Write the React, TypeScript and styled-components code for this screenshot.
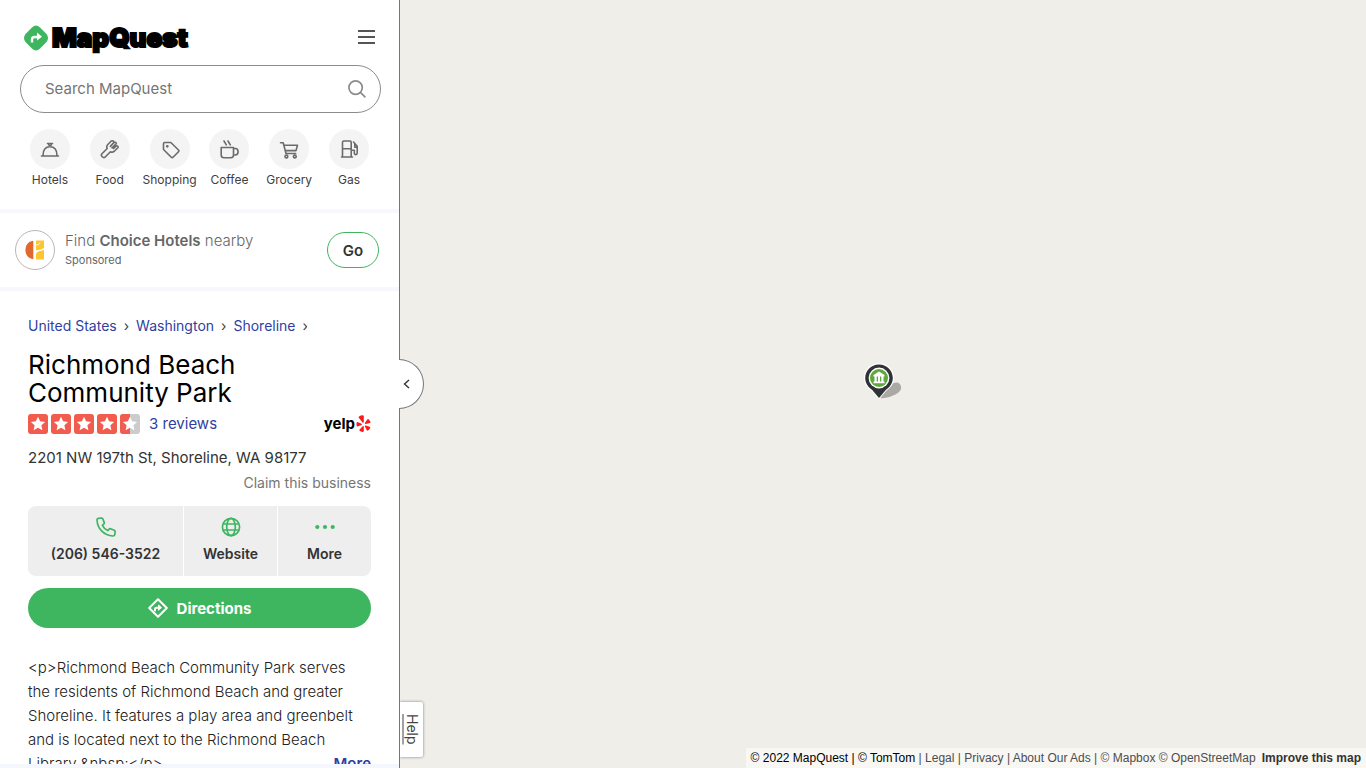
import React from 'react';
import styled, { createGlobalStyle } from 'styled-components';

const GlobalStyle = createGlobalStyle`
  *, *::before, *::after { box-sizing: border-box; }
  body { margin: 0; overflow: hidden; font-family: Inter, "Open Sans", sans-serif; color: #333; background: #f0eee9; }
  h1, p, ol, ul { margin: 0; padding: 0; }
  ol, ul { list-style: none; }
  a { color: inherit; text-decoration: none; }
  button { font: inherit; color: inherit; cursor: pointer; padding: 0; border: 0; background: none; }
  svg { display: block; flex: none; }
`;

const Page = styled.div`
  display: flex;
  height: 100vh;
`;

const Sidebar = styled.aside`
  flex: 0 0 400px;
  display: flex;
  flex-direction: column;
  background: #fff;
  border-right: 1px solid #757575;
  min-height: 0;
`;

const Scroll = styled.div`
  flex: 1;
  min-height: 0;
  overflow: hidden;
`;

const BottomStrip = styled.div`
  height: 4px;
  background: #f5f7ff;
`;

const Top = styled.header`
  padding: 22px 18px 21px 20px;
  border-bottom: 4px solid #f7f7fd;
`;

const Brand = styled.div`
  display: flex;
  justify-content: space-between;
  align-items: center;
  height: 32px;
  padding: 0 6px 0 4px;
`;

const LogoLink = styled.a`
  display: flex;
  align-items: center;
  gap: 4px;
`;

const Wordmark = styled.span`
  font-size: 26px;
  line-height: 32px;
  font-weight: 900;
  color: #000;
  -webkit-text-stroke: 2px #000;
`;

const SearchBox = styled.form`
  display: flex;
  align-items: center;
  height: 48px;
  margin-top: 11px;
  padding: 0 14px 0 24px;
  border: 1px solid #8c8c8c;
  border-radius: 24px;
`;

const SearchInput = styled.input`
  flex: 1;
  min-width: 0;
  border: 0;
  padding: 0;
  outline: none;
  background: none;
  font: 400 15px/20px Inter, "Open Sans", sans-serif;
  &::placeholder { color: #757575; opacity: 1; }
`;

const Categories = styled.ul`
  display: grid;
  grid-template-columns: repeat(6, 1fr);
  margin: 16px 2px 0 0;
`;

const Category = styled.button`
  display: flex;
  flex-direction: column;
  align-items: center;
  width: 100%;
  gap: 3px;
  font-size: 12px;
  line-height: 16px;
  color: #404040;
`;

const CategoryDisc = styled.span`
  display: grid;
  place-items: center;
  width: 40px;
  height: 40px;
  border-radius: 50%;
  background: #f4f4f4;
`;

const Promo = styled.section`
  display: flex;
  align-items: center;
  gap: 10px;
  height: 78px;
  padding: 0 20px 0 15px;
  border-bottom: 4px solid #f7f7fd;
`;

const PromoLogo = styled.span`
  display: grid;
  place-items: center;
  width: 40px;
  height: 40px;
  border: 1px solid #bdb5b1;
  border-radius: 50%;
`;

const PromoText = styled.div`
  flex: 1;
  font-size: 15px;
  font-weight: 300;
  line-height: 20px;
  color: #666;
  strong { font-weight: 600; }
`;

const Sponsored = styled.p`
  font-size: 11px;
  font-weight: 400;
  line-height: 18px;
`;

const GoButton = styled.button`
  width: 52px;
  height: 36px;
  border: 1px solid #3fb560;
  border-radius: 18px;
  font-size: 15px;
  font-weight: 600;
  color: #333;
`;

const Details = styled.main`
  padding: 25px 28px 0;
`;

const Crumbs = styled.ol`
  display: flex;
  gap: 7px;
  font-size: 14px;
  line-height: 20px;
  color: #303f9f;
`;

const Crumb = styled.li`
  display: flex;
  gap: 7px;
  &::after { content: "›"; color: #404040; }
`;

const Title = styled.h1`
  margin-top: 15px;
  font-size: 26px;
  line-height: 28px;
  font-weight: 400;
  color: #000;
`;

const Rating = styled.div`
  display: flex;
  align-items: center;
  height: 20px;
  margin-top: 7px;
`;

const Stars = styled.div`
  display: flex;
  gap: 3px;
`;

const Reviews = styled.a`
  margin-left: 9px;
  font-size: 15px;
  line-height: 20px;
  color: #303f9f;
`;

const Yelp = styled.a`
  display: flex;
  align-items: center;
  gap: 1px;
  margin-left: auto;
  font-size: 15px;
  line-height: 20px;
  font-weight: 700;
  color: #000;
`;

const Address = styled.p`
  margin-top: 12px;
  font-size: 15px;
  line-height: 24px;
`;

const Claim = styled.a`
  display: block;
  text-align: right;
  font-size: 14px;
  line-height: 25px;
  color: #757575;
`;

const Actions = styled.div`
  display: grid;
  grid-template-columns: 5fr 3fr 3fr;
  gap: 1px;
  margin-top: 11px;
  border-radius: 8px;
  overflow: hidden;
`;

const Action = styled.button`
  display: flex;
  flex-direction: column;
  align-items: center;
  height: 70px;
  padding-top: 11px;
  gap: 7px;
  background: #eee;
  font-size: 14px;
  line-height: 20px;
  font-weight: 600;
  white-space: nowrap;
`;

const Directions = styled.button`
  display: flex;
  align-items: center;
  justify-content: center;
  gap: 9px;
  width: 100%;
  height: 40px;
  margin-top: 12px;
  border-radius: 20px;
  background: #3eb660;
  color: #fff;
  font-size: 15px;
  font-weight: 700;
`;

const Description = styled.div`
  margin-top: 28px;
  font-size: 15px;
  font-weight: 300;
  line-height: 24px;
  white-space: nowrap;
  color: #222;
`;

const LastLine = styled.div`
  display: flex;
  justify-content: space-between;
`;

const MoreLink = styled.a`
  font-weight: 600;
  color: #303f9f;
`;

const MapArea = styled.section`
  position: relative;
  flex: 1;
  min-width: 0;
  background: #f0eee9;
`;

const Collapse = styled.button`
  position: absolute;
  left: -1px;
  top: calc(50% - 25px);
  display: grid;
  place-items: center start;
  padding-left: 4px;
  width: 25px;
  height: 50px;
  border: 1px solid #757575;
  border-left: 0;
  border-radius: 0 25px 25px 0;
  background: #fff;
`;

const Help = styled.button`
  position: absolute;
  left: 0;
  bottom: 11px;
  width: 23px;
  height: 55px;
  border-radius: 0 2px 2px 0;
  background: #fff;
  box-shadow: 0 0 3px rgba(0, 0, 0, 0.5);
  clip-path: inset(-5px -5px -5px 0);
  writing-mode: vertical-rl;
  font-size: 14px;
  line-height: 22px;
  text-align: center;
  text-decoration: underline;
  text-underline-offset: 1px;
  text-decoration-skip-ink: none;
  color: #444;
`;

const Pin = styled.button`
  position: absolute;
  left: calc(50% - 20px);
  top: calc(50% - 22px);
`;

const Attribution = styled.footer`
  position: absolute;
  right: 0;
  bottom: 0;
  padding: 0 5px;
  background: rgba(255, 255, 255, 0.5);
  font: 12px/20px "Liberation Sans", Arial, sans-serif;
  color: #000;
  white-space: nowrap;
`;

const Credits = styled.span`
  color: #4d4d4d;
`;

const Improve = styled.a`
  margin-left: 6px;
  font-weight: 700;
  color: #333;
`;

type Drawing = { size?: number; children: React.ReactNode };

const LineIcon = ({ size = 20, children }: Drawing) => (
  <svg width={size} height={size} viewBox="0 0 20 20" fill="none" stroke="#6b6b6b" strokeWidth="1.6" strokeLinejoin="round" strokeLinecap="round" aria-hidden="true">
    {children}
  </svg>
);

const categories = [
  { name: 'Hotels', icon: <path d="M1.5 17H18.5M3 16.5C3 11 5.5 7.7 10 7.7S17 11 17 16.5M7.5 4.5H12.5M8.5 5C8.5 7 11.5 7 11.5 5" /> },
  { name: 'Food', icon: <path d="M11 2.2L7.6 5.7C6.5 7 6.6 8.4 7.2 9.5L1.7 15C.4 16.7 3.3 19.5 5 18.2L10.4 12.7C11.6 13.4 13 13.4 14.3 12.2L17.8 8.8C18.7 7.6 17.3 6.3 16.2 7L13.6 9.4M10.4 7.4L13.8 3.6C14.4 2.4 12.3 1.1 11 2.2M12 8.8L16 5C16.8 3.9 15.5 2.6 14 3.6" /> },
  { name: 'Shopping', icon: <><path d="M3.5 4.7C3.5 4 4 3.5 4.7 3.5H10.8L18.5 11C19.1 11.6 19.1 12.1 18.5 12.7L13 18.2C12.4 18.8 11.9 18.8 11.3 18.2L3.5 10.5Z" /><circle cx="7.3" cy="7.3" r=".6" fill="#6b6b6b" /></> },
  { name: 'Coffee', icon: <path d="M2.2 8.5H14.5V16C14.5 18 13.7 18.8 11.7 18.8H5C3 18.8 2.2 18 2.2 16ZM14.5 9.5H16.3C20 9.5 20 16 16.3 16H14.5M5 2L7.3 5.8M9 2L11.3 5.8" /> },
  { name: 'Grocery', icon: <><path d="M1.5 3.7H4.2L7 14.5H16.7M5 6.3H18.5L17 11.6H6.4" /><circle cx="7.4" cy="17.5" r="1.4" /><circle cx="15.8" cy="17.5" r="1.4" /></> },
  { name: 'Gas', icon: <path d="M3.5 17.8V3.3C3.5 2.4 4 2 4.7 2H11C11.8 2 12.2 2.4 12.2 3.2V17.8M2.5 18H13.5M3.5 9.7H12.2M14.5 3L18.2 7.3V13.8C18.2 16.2 15.3 16.2 15.3 14V11.3H12.5M15.8 5V8.2H18" /> },
];

const LogoMark = () => (
  <svg width="24" height="26" viewBox="0 0 24 26" aria-hidden="true">
    <path d="M8 2.5Q12-1.5 16 2.5L22.5 9Q25.5 13 22.5 17L16 23.5Q12 27.5 8 23.5L1.5 17Q-1.5 13 1.5 9Z" fill="#3eb660" />
    <path d="M8 17.5V14.5Q8 12 10.5 12H14" fill="none" stroke="#fff" strokeWidth="2.4" />
    <path d="M13 7.5L18 11.7L13 15.5Z" fill="#fff" />
  </svg>
);

const ChoiceMark = () => (
  <svg width="20" height="20" viewBox="0 0 20 20" aria-hidden="true">
    <path d="M8.3.8V19.2C-2.2 18-2.2 2 8.3.8Z" fill="#e2672c" />
    <path d="M11 .5H19V8Q15 10.5 11 10.2Z" fill="#fdc52e" />
    <path d="M11 14Q12 11.5 14 11.3Q17 11.2 19 9.5V19.5H11Z" fill="#fdc52e" />
    <path d="M10.8 5.2Q14.5 5 15 2.5" fill="none" stroke="#fff" strokeWidth=".8" />
  </svg>
);

const Star = ({ half = false }: { half?: boolean }) => (
  <svg width="20" height="20" viewBox="0 0 20 20" aria-hidden="true">
    <rect width="20" height="20" rx="3" fill={half ? '#ccc' : '#f15c4f'} />
    {half && <path d="M3 0H10V20H3Q0 20 0 17V3Q0 0 3 0Z" fill="#f15c4f" />}
    <path d="M10 2.8L12.1 7.3L17.1 7.9L13.4 11.3L14.4 16.2L10 13.8L5.6 16.2L6.6 11.3L2.9 7.9L7.9 7.3Z" fill="#fff" />
  </svg>
);

const YelpBurst = () => (
  <svg width="15" height="18" viewBox="0 0 15 18" fill="#ff1a1a" aria-hidden="true">
    <path d="M3 1.5Q5 0 7 .2Q7.8.5 7.8 1.3V7.1Q7.4 8.5 6.5 7.5L2.8 2.7Q2.4 2 3 1.5Z" />
    <path d="M1.4 7L5.6 8.8Q6.5 9.5 5.5 10.1L1.5 11.4Q.5 11.5.5 10.3Q.3 8.7.7 7.5Q1 6.9 1.4 7Z" />
    <path d="M6.7 11.2Q7.8 10.4 7.8 11.7V16Q7.6 17.1 6.7 17Q4.5 16.5 3.5 15.4Q3.1 14.8 3.6 14.4Z" />
    <path d="M9.6 10.4L13.8 11.8Q14.7 12.3 14.2 13.1Q13.3 14.7 12 15.6Q11.2 15.9 10.8 15.2L8.9 11.6Q8.5 10.3 9.6 10.4Z" />
    <path d="M9 7.7L11.5 4.3Q12.1 3.8 12.8 4.4Q14 5.5 14.5 7Q14.7 7.8 13.9 8.1L9.7 9.1Q8.4 9.1 9 7.7Z" />
  </svg>
);

const PhoneIcon = () => (
  <svg width="20" height="20" viewBox="0 0 20 20" fill="none" stroke="#3eb660" strokeWidth="1.7" strokeLinejoin="round" aria-hidden="true">
    <path d="M5.4 1L2.4 1.3C1.3 1.4.9 2 1 3.2C1.6 12 8 18.4 16.8 19C18 19.1 18.6 18.7 18.8 17.6L19.1 14.7C19.2 14 18.9 13.5 18.2 13.2L14.6 11.7C14 11.5 13.5 11.6 13.1 12.1L11.7 13.6C9.2 12.3 7.6 10.8 6.4 8.3L7.9 6.9C8.3 6.5 8.4 6 8.2 5.4L6.8 1.8C6.5 1.2 6.1 1 5.4 1Z" />
  </svg>
);

const GlobeIcon = () => (
  <svg width="20" height="20" viewBox="0 0 20 20" fill="none" stroke="#3eb660" strokeWidth="1.7" aria-hidden="true">
    <circle cx="10" cy="10" r="8.6" />
    <ellipse cx="10" cy="10" rx="4.3" ry="8.6" />
    <path d="M2 7H18M2 13H18" />
  </svg>
);

const DotsIcon = () => (
  <svg width="20" height="20" viewBox="0 0 20 20" fill="#3eb660" aria-hidden="true">
    <circle cx="2.3" cy="10" r="2.1" /><circle cx="10" cy="10" r="2.1" /><circle cx="17.7" cy="10" r="2.1" />
  </svg>
);

const DirectionsIcon = () => (
  <svg width="20" height="20" viewBox="0 0 20 20" fill="none" stroke="#fff" strokeWidth="2" strokeLinejoin="round" aria-hidden="true">
    <path d="M10 1.2L18.8 10L10 18.8L1.2 10Z" />
    <path d="M7 13.2V11Q7 9.7 8.5 9.7H11" />
    <path d="M10.5 7L13.5 9.6L10.5 12.2Z" fill="#fff" strokeWidth="1" />
  </svg>
);

const PinIcon = () => (
  <svg width="40" height="38" viewBox="0 0 40 38" aria-hidden="true">
    <path d="M17 36C22 37 36 33 38 27C39 20 32 18 27 24Z" fill="#aaa9a4" />
    <path d="M16 37.2L8.5 28.5C-5 20 1 1.2 16 1.2S37 20 23.5 28.5Z" fill="#fff" />
    <path d="M16 36L9 27.7C-3.2 20 2.2 2.5 16 2.5S35.2 20 23 27.7Z" fill="#2f3336" />
    <circle cx="16" cy="16" r="10.4" fill="#fff" />
    <circle cx="16" cy="16" r="9" fill="#5fa63d" />
    <path d="M16 9.5L21.5 13V14.5H10.5V13ZM11.5 14H13.7V20H11.5ZM15 14H17V20H15ZM18.3 14H20.5V20H18.3ZM10.5 19.5H21.5V21.3H10.5Z" fill="#fff" />
  </svg>
);

export default function App() {
  return (
    <>
      <GlobalStyle />
      <Page>
        <Sidebar>
          <Scroll>
            <Top>
              <Brand>
                <LogoLink href="#"><LogoMark /><Wordmark>MapQuest</Wordmark></LogoLink>
                <button type="button" aria-label="Menu">
                  <svg width="17" height="16" viewBox="0 0 17 16" stroke="#555" strokeWidth="2" aria-hidden="true"><path d="M0 1H17M0 7H17M0 13H17" /></svg>
                </button>
              </Brand>
              <SearchBox role="search">
                <SearchInput type="search" placeholder="Search MapQuest" aria-label="Search MapQuest" />
                <button type="submit" aria-label="Search">
                  <svg width="18" height="18" viewBox="0 0 18 18" fill="none" stroke="#8c8c8c" strokeWidth="1.7" aria-hidden="true">
                    <circle cx="7.6" cy="7.6" r="6.7" /><path d="M12.4 12.4L17.4 17.4" />
                  </svg>
                </button>
              </SearchBox>
              <Categories>
                {categories.map(({ name, icon }) => (
                  <li key={name}>
                    <Category type="button">
                      <CategoryDisc><LineIcon>{icon}</LineIcon></CategoryDisc>
                      {name}
                    </Category>
                  </li>
                ))}
              </Categories>
            </Top>
            <Promo>
              <PromoLogo><ChoiceMark /></PromoLogo>
              <PromoText>
                <p>Find <strong>Choice Hotels</strong> nearby</p>
                <Sponsored>Sponsored</Sponsored>
              </PromoText>
              <GoButton type="button">Go</GoButton>
            </Promo>
            <Details>
              <nav aria-label="Breadcrumb">
                <Crumbs>
                  {['United States', 'Washington', 'Shoreline'].map((place) => (
                    <Crumb key={place}><a href="#">{place}</a></Crumb>
                  ))}
                </Crumbs>
              </nav>
              <Title>Richmond Beach<br />Community Park</Title>
              <Rating>
                <Stars role="img" aria-label="4.5 stars"><Star /><Star /><Star /><Star /><Star half /></Stars>
                <Reviews href="#">3 reviews</Reviews>
                <Yelp href="#">yelp<YelpBurst /></Yelp>
              </Rating>
              <Address>2201 NW 197th St, Shoreline, WA 98177</Address>
              <Claim href="#">Claim this business</Claim>
              <Actions>
                <Action type="button"><PhoneIcon />(206) 546-3522</Action>
                <Action type="button"><GlobeIcon />Website</Action>
                <Action type="button"><DotsIcon />More</Action>
              </Actions>
              <Directions type="button"><DirectionsIcon />Directions</Directions>
              <Description>
                {'<p>Richmond Beach Community Park serves'}<br />
                the residents of Richmond Beach and greater<br />
                Shoreline. It features a play area and greenbelt<br />
                and is located next to the Richmond Beach
                <LastLine><span>{'Library.&nbsp;</p>'}</span><MoreLink href="#">More</MoreLink></LastLine>
              </Description>
            </Details>
          </Scroll>
          <BottomStrip />
        </Sidebar>
        <MapArea aria-label="Map">
          <Collapse type="button" aria-label="Collapse panel">
            <svg width="7" height="10" viewBox="0 0 7 10" fill="none" stroke="#333" strokeWidth="1.4" aria-hidden="true"><path d="M6 1L1.5 5L6 9" /></svg>
          </Collapse>
          <Pin type="button" aria-label="Richmond Beach Community Park"><PinIcon /></Pin>
          <Help type="button">Help</Help>
          <Attribution>
            © 2022 MapQuest | © TomTom <Credits>| <a href="#">Legal</a> | <a href="#">Privacy</a> | <a href="#">About Our Ads</a> | <a href="#">© Mapbox</a> <a href="#">© OpenStreetMap</a></Credits>
            <Improve href="#">Improve this map</Improve>
          </Attribution>
        </MapArea>
      </Page>
    </>
  );
}
